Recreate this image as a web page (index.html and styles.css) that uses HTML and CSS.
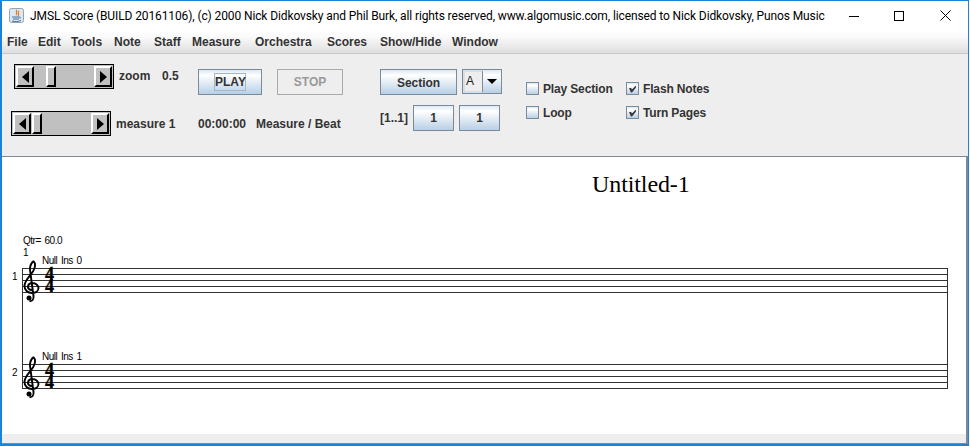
FILE: index.html
```html
<!DOCTYPE html>
<html lang="en">
<head>
    <meta charset="UTF-8">
    <title>JMSL Score</title>
    <link rel="stylesheet" href="styles.css">
</head>
<body>
    <div class="win">
        <header class="titlebar">
            <svg class="appicon" width="15" height="15" viewBox="0 0 15 15">
                <rect x="0.5" y="0.5" width="14" height="14" rx="2" fill="#dfe8f0" stroke="#8fa3b5"/>
                <path d="M8 2C6 4 9 5 7 7M10 3C8 5 11 6 9 8" fill="none" stroke="#e0762a" stroke-width="1.2"/>
                <path d="M3 9h7c1 0 2 .5 1 1.500M4 11h6M3 13c3 .8 6 .8 9-.5" fill="none" stroke="#3f6f9c" stroke-width="1"/>
            </svg>
            <span class="title">JMSL Score (BUILD 20161106), (c) 2000 Nick Didkovsky and Phil Burk, all rights reserved, www.algomusic.com, licensed to Nick Didkovsky, Punos Music</span>
            <svg class="wbtn wmin" width="10" height="10" viewBox="0 0 10 10"><path d="M0 5.500H10" stroke="#000"/></svg>
            <svg class="wbtn wmax" width="10" height="10" viewBox="0 0 10 10"><rect x="0.500" y="0.500" width="9" height="9" fill="none" stroke="#000"/></svg>
            <svg class="wbtn wclose" width="11" height="11" viewBox="0 0 11 11"><path d="M.5 .5L10.500 10.500M10.500 .5L.5 10.500" stroke="#000"/></svg>
        </header>

        <nav class="menubar">
            <span class="m-file">File</span>
            <span class="m-edit">Edit</span>
            <span class="m-tools">Tools</span>
            <span class="m-note">Note</span>
            <span class="m-staff">Staff</span>
            <span class="m-measure">Measure</span>
            <span class="m-orch">Orchestra</span>
            <span class="m-scores">Scores</span>
            <span class="m-show">Show/Hide</span>
            <span class="m-window">Window</span>
        </nav>

        <section class="panel">
            <div class="transport">
                <div class="row row-zoom">
                    <div class="sbar">
                        <div class="sbtn"><i class="arrow-l"></i></div>
                        <div class="thumb thumb-zoom"></div>
                        <div class="sbtn sbtn-r"><i class="arrow-r"></i></div>
                    </div>
                    <span class="lbl lbl-zoom">zoom</span>
                    <span class="lbl lbl-val">0.5</span>
                    <button class="btn btn-play"><span class="focus">PLAY</span></button>
                    <button class="btn btn-stop">STOP</button>
                </div>
                <div class="row row-measure">
                    <div class="sbar">
                        <div class="sbtn"><i class="arrow-l"></i></div>
                        <div class="thumb thumb-measure"></div>
                        <div class="sbtn sbtn-r"><i class="arrow-r"></i></div>
                    </div>
                    <span class="lbl lbl-measure">measure 1</span>
                    <span class="lbl lbl-time">00:00:00</span>
                    <span class="lbl lbl-mb">Measure / Beat</span>
                </div>
            </div>

            <div class="section-box">
                <div class="row-sec">
                    <button class="btn btn-section">Section</button>
                    <div class="combo">
                        <span class="combo-val">A</span>
                        <span class="combo-btn"><i class="arrow-d"></i></span>
                    </div>
                </div>
                <div class="row-range">
                    <span class="lbl lbl-range">[1..1]</span>
                    <button class="btn btn-num">1</button>
                    <button class="btn btn-num">1</button>
                </div>
            </div>

            <div class="checks">
                <label class="chk"><i class="box"></i>Play Section</label>
                <label class="chk"><i class="box"><svg width="11" height="11" viewBox="0 0 11 11"><path class="tick" d="M2 5L4 5L5 6.500L9 2.500L9 4.500L5 9.500L4 9.500Z"/></svg></i>Flash Notes</label>
                <label class="chk"><i class="box"></i>Loop</label>
                <label class="chk"><i class="box"><svg width="11" height="11" viewBox="0 0 11 11"><path class="tick" d="M2 5L4 5L5 6.500L9 2.500L9 4.500L5 9.500L4 9.500Z"/></svg></i>Turn Pages</label>
            </div>
        </section>

        <main class="score">
            <svg class="sheet" width="964" height="277" viewBox="2 157 964 277">
                <text class="s-title" x="592" y="192">Untitled-1</text>
                <text class="s-small" x="23" y="244">Qtr= 60.0</text>
                <text class="s-small" x="23" y="256">1</text>
                <text class="s-small" x="42" y="264">Null Ins 0</text>
                <text class="s-small" x="42" y="360">Null Ins 1</text>
                <text class="s-num" x="12" y="280">1</text>
                <text class="s-num" x="12" y="376">2</text>

                <g class="lines">
                    <path d="M22 268.500H948M22 274.500H948M22 280.500H948M22 286.500H948M22 292.500H948"/>
                    <path d="M22 364.500H948M22 370.500H948M22 376.500H948M22 382.500H948M22 388.500H948"/>
                    <path d="M22.500 268V389M947.500 268V389"/>
                </g>

                <g>
                    <path id="clef" class="clef" d="M32 290C29 290 27.500 288 28 286C28.500 284 30.500 283 32.500 283C35.500 283 38.500 285.500 38.500 288C38.500 291 35.500 293 32 293C27.500 293 24.500 290 24.500 286C24.500 281 29 277 32 273C34 270 35.500 267.500 35 264C34.700 262 33.300 261 33 261.500C31 263.500 29.800 267 30 270L33.500 296C34 299.500 32 301.500 29.500 301"/>
                    <circle cx="29" cy="298" r="2.500"/>
                    <text class="s-time"><tspan x="45" y="280">4</tspan><tspan x="45" y="292">4</tspan></text>
                </g>
                <g transform="translate(0 96)">
                    <use href="#clef"/>
                    <circle cx="29" cy="298" r="2.500"/>
                    <text class="s-time"><tspan x="45" y="280">4</tspan><tspan x="45" y="292">4</tspan></text>
                </g>
            </svg>
            <div class="hscroll"></div>
        </main>
    </div>
</body>
</html>
```

FILE: styles.css
```css
*{ margin: 0; padding: 0; box-sizing: border-box; }
html,body{
    height:100%;
    overflow: hidden;
    background: #fff;
}
.win{
    width:969px;
    height:446px;
    display: flex;
    flex-direction: column;
    border: 2px solid #1883d7;
    border-width: 1px 1px 2px 2px;
    font-family: "Liberation Sans", Arial, sans-serif;
    color: #333;
}

/* title bar */
.titlebar{
    height:29px;
    flex: none;
    display: flex;
    align-items: center;
    background: #fff;
    color: #000;
}
.appicon{ margin-left: 7px; flex: none; }
.title{
    margin-left: 6px;
    width: 826px;
    white-space: nowrap;
    font: 12px Roboto, "Noto Sans", sans-serif;
    letter-spacing: -.11px;
    color: #000;
}
.wbtn{ flex: none; }
.wmin{ margin-left: -7px; }
.wmax{ margin-left: 35px; }
.wclose{ margin-left: 36px; }

/* menu */
.menubar{
    height:24px;
    flex: none;
    display: flex;
    align-items: center;
    background: linear-gradient(#fff, #fafafa 30%, #dedede);
    border-bottom: 1px solid #c8c8c8;
    font-size: 12px;
    font-weight: bold;
    white-space: nowrap;
    padding-left: 5px;
}
.menubar span{ display: block; }
.m-file{ width:31px; }
.m-edit{ width:33px; }
.m-tools{ width:43px; }
.m-note{ width:40px; }
.m-staff{ width:38px; }
.m-measure{ width:63px; }
.m-orch{ width:72px; }
.m-scores{ width:53px; }
.m-show{ width:72px; }

/* controls */
.panel{
    height:102px;
    flex: none;
    display: flex;
    background: #eee;
    font-size: 12px;
    font-weight: bold;
}
.transport{
    width:378px;
    flex: none;
    padding: 10px 0 0 9px;
}
.row{ display: flex; align-items: flex-start; }
.row-zoom{ padding-left: 3px; height:47px; }
.lbl{ white-space: nowrap; line-height: 14px; }
.lbl-zoom{ margin: 5px 0 0 5px; width:43px; }
.lbl-val{ margin-top: 5px; width:36px; }
.lbl-measure{ margin: 6px 0 0 5px; width:82px; }
.lbl-time{ margin-top: 6px; width:58px; }
.lbl-mb{ margin-top: 6px; }

.sbar{
    width:100px;
    height:25px;
    flex: none;
    display: flex;
    align-items: stretch;
    background: #c0c0c0;
    border: 1px solid #000;
    padding: 1px;
}
.sbtn{
    width:18px;
    flex: none;
    display: flex;
    align-items: center;
    justify-content: center;
    background: #c0c0c0;
    border: 2px solid;
    border-color: #fff #000 #000 #fff;
}
.sbtn-r{ margin-left: auto; }
.thumb{
    width:10px;
    flex: none;
    background: #c0c0c0;
    border: 2px solid;
    border-color: #fff #000 #000 #fff;
}
.thumb-zoom{ margin-left: 12px; }
.thumb-measure{ margin-left: 1px; }
.arrow-l,.arrow-r{
    width:0;
    height:0;
    border-top: 6px solid transparent;
    border-bottom: 6px solid transparent;
}
.arrow-l{ border-right: 7px solid #000; }
.arrow-r{ border-left: 7px solid #000; }

.btn{
    font: bold 12px "Liberation Sans", Arial, sans-serif;
    color: #333;
    border: 1px solid #7a8a99;
    background: linear-gradient(#dde8f3, #fff 22%, #b8cfe5);
    display: flex;
    align-items: center;
    justify-content: center;
    flex: none;
}
.btn-play{ width:64px; height:26px; margin: 5px 0 0 0; }
.focus{
    display: block;
    width:32px;
    height:18px;
    line-height: 16px;
    border: 1px solid #a3b8cc;
}
.btn-stop{
    width:66px;
    height:26px;
    margin: 5px 0 0 15px;
    background: #eee;
    border-color: #aaa;
    color: #999;
}

.section-box{
    width:146px;
    flex: none;
    padding-top: 15px;
}
.row-sec{ display: flex; height:36px; }
.btn-section{ width:77px; height:26px; padding-top: 2px; letter-spacing: -.05px; }
.combo{
    width:40px;
    height:25px;
    margin-left: 5px;
    display: flex;
    border: 1px solid #7a8a99;
    background: #eee;
}
.combo-val{
    width:20px;
    border: 2px solid #d5e0ea;
    border-right: 1px solid #7a8a99;
    line-height: 19px;
    padding-left: 1px;
    font-weight: normal;
    color: #222;
}
.combo-btn{
    flex: 1;
    display: flex;
    align-items: center;
    justify-content: center;
    background: linear-gradient(#dde8f3, #fff 22%, #b8cfe5);
}
.arrow-d{
    width:0;
    height:0;
    border-left: 5px solid transparent;
    border-right: 5px solid transparent;
    border-top: 5px solid #000;
}
.row-range{ display: flex; align-items: center; }
.lbl-range{ width:33px; }
.btn-num{ width:41px; height:26px; margin-right: 5px; }

.checks{
    margin-top: 28px;
    display: grid;
    grid-template-columns: 100px 100px;
    grid-auto-rows: 24px;
    align-content: start;
}
.chk{
    display: flex;
    align-items: center;
    height:13px;
    white-space: nowrap;
    letter-spacing: -.15px;
}
.box{
    width:13px;
    height:13px;
    flex: none;
    margin-right: 4px;
    display: flex;
    align-items: center;
    justify-content: center;
    border: 1px solid #7a8a99;
    background: linear-gradient(#dde8f3, #fff 22%, #b8cfe5);
}
.box svg{ display: block; }
.tick{ fill: #333; }

/* score canvas */
.score{
    flex: 1;
    display: flex;
    flex-direction: column;
    background: #fff;
    border: 1px solid #7a8a99;
    border-width: 1px 2px 1px 0;
    min-height: 0;
}
.sheet{ display: block; flex: none; background: #fff; }
.hscroll{ flex: 1; background: #eee; }
.lines path{ stroke: #333; stroke-width: 1; fill: none; shape-rendering: crispEdges; }
.clef{ fill: none; stroke: #000; stroke-width: 1.9; }
.s-title{ font: 24px "Liberation Serif", "Times New Roman", serif; fill: #000; letter-spacing: -.1px; }
.s-small{ font: 10px "Liberation Sans", Arial, sans-serif; fill: #000; letter-spacing: -.5px; word-spacing: 1.5px; }
.s-num{ font: 10px "Liberation Sans", Arial, sans-serif; fill: #000; }
.s-time{ font: bold 18px "Liberation Serif", "Times New Roman", serif; fill: #000; stroke: #000; stroke-width: .4; }
```
